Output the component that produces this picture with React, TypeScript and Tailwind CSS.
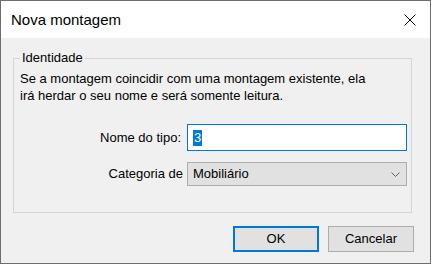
export default function App() {
  return (
    <div
      className="w-[431px] h-[264px] border border-[#6d6d6d] bg-[#f0f0f0] flex flex-col text-[13px] text-black"
      style={{ fontFamily: '"Liberation Sans", Arial, sans-serif' }}
    >
      {/* barra de título */}
      <div className="h-[37px] bg-white flex items-center justify-between pl-[10px] pr-[14px]">
        <span className="text-[15px] leading-none">Nova montagem</span>
        <svg width="12" height="12" viewBox="0 0 12 12" className="text-black">
          <path d="M0.5 0.5 L11.5 11.5 M11.5 0.5 L0.5 11.5" stroke="currentColor" strokeWidth="1" fill="none" />
        </svg>
      </div>

      <div className="flex-1 flex flex-col">
        <fieldset className="mt-[12px] ml-[12px] mr-[18px] h-[163px] border border-[#d5d5d5] px-0">
          <legend className="ml-[6px] px-[2px] leading-[16px]">Identidade</legend>
          <p className="pl-[6px] pt-[4px] leading-[17px]">
            Se a montagem coincidir com uma montagem existente, ela
            <br />
            irá herdar o seu nome e será somente leitura.
          </p>

          <div className="mt-[20px] flex flex-col gap-[11px]">
            <div className="flex items-center">
              <label className="w-[173px] text-right pr-[6px]">Nome do tipo:</label>
              <div className="w-[220px] h-[27px] border border-[#0078d7] bg-white flex items-center pl-[5px]">
                <span className="bg-[#0078d7] text-white leading-[16px] px-[1px]">3</span>
              </div>
            </div>
            <div className="flex items-center">
              <label className="w-[173px] text-right pr-[4px]">Categoria de</label>
              <div className="w-[220px] h-[24px] border border-[#adadad] bg-[#e1e1e1] flex items-center justify-between pl-[5px] pr-[6px]">
                <span>Mobiliário</span>
                <svg width="9" height="5" viewBox="0 0 9 5">
                  <path d="M0.5 0.5 L4.5 4.5 L8.5 0.5" stroke="#606060" strokeWidth="1" fill="none" />
                </svg>
              </div>
            </div>
          </div>
        </fieldset>

        <div className="mt-[13px] flex justify-end gap-[9px] pr-[16px]">
          <button className="w-[86px] h-[26px] border-2 border-[#0078d7] bg-[#e1e1e1]">OK</button>
          <button className="w-[86px] h-[26px] border border-[#adadad] bg-[#e1e1e1]">Cancelar</button>
        </div>
      </div>
    </div>
  );
}
